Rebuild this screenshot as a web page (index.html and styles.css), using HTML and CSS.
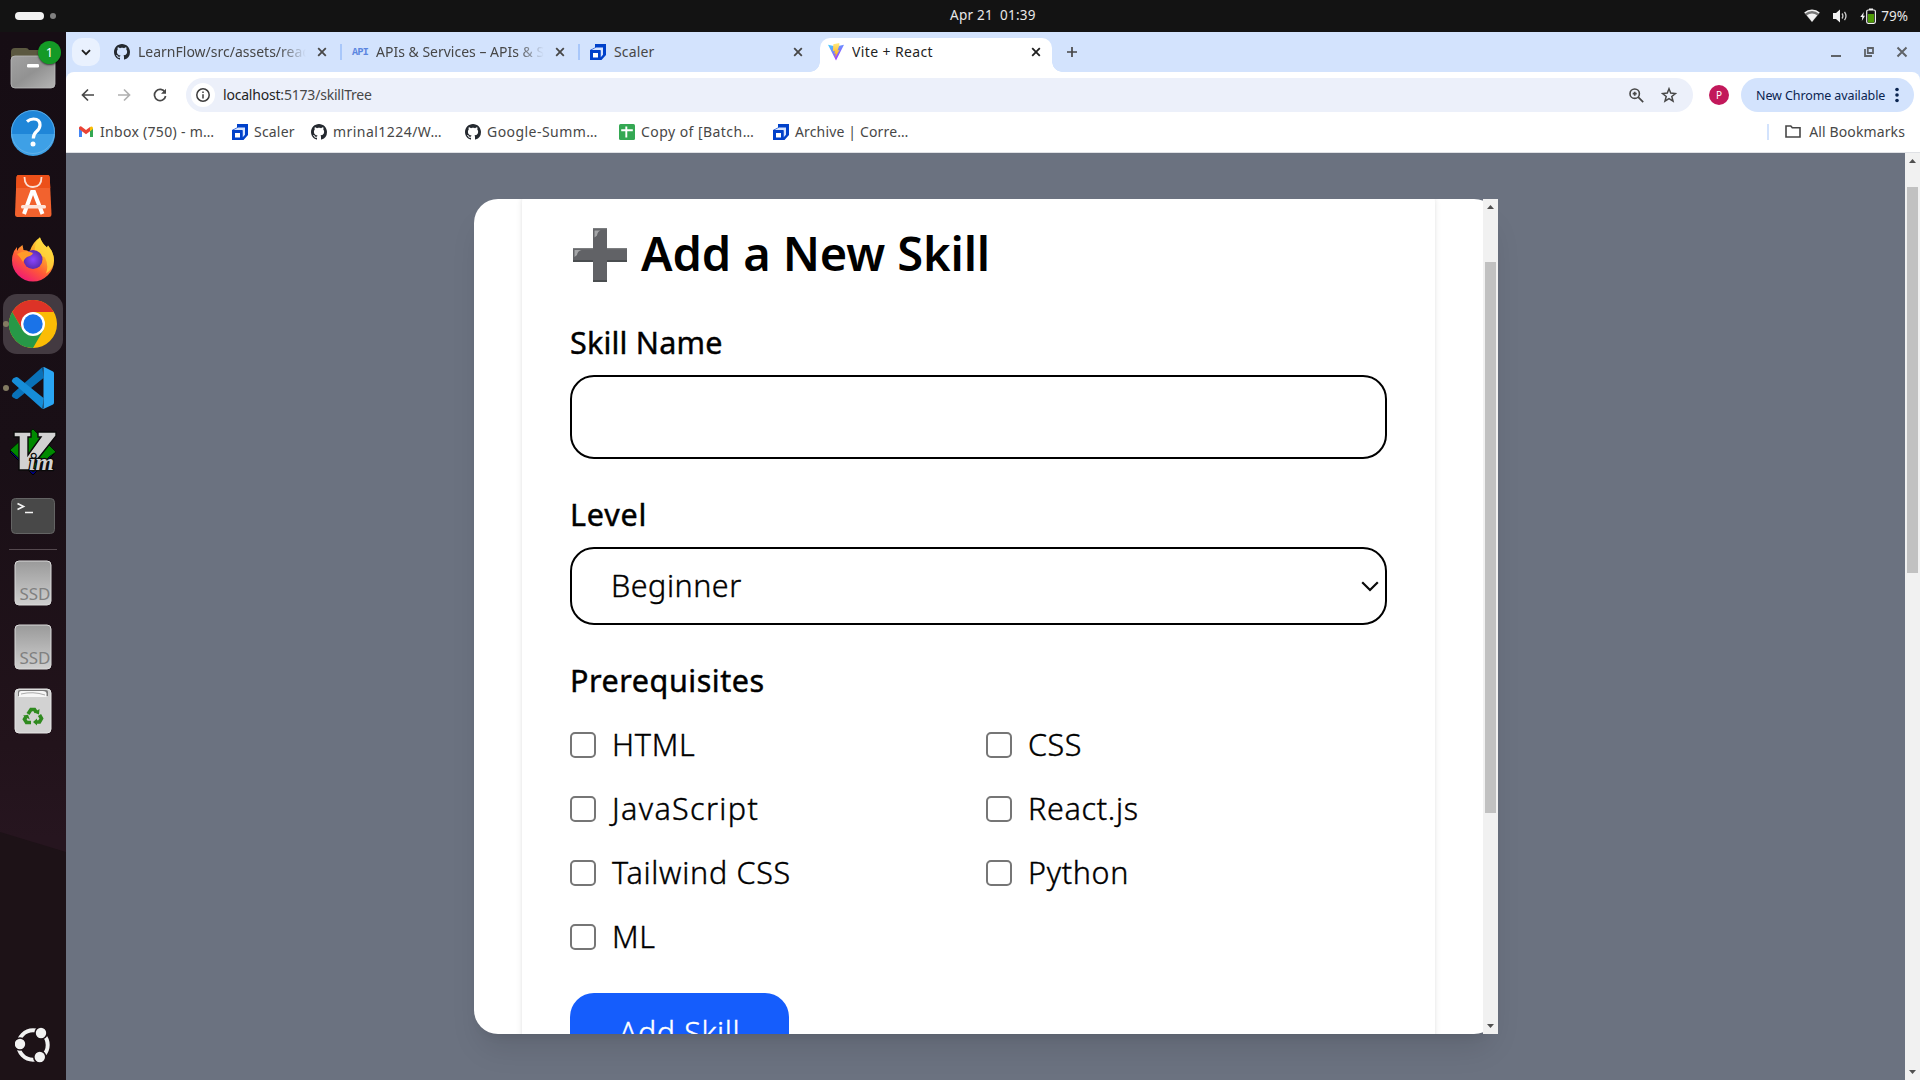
FILE: index.html
```html
<!DOCTYPE html>
<html lang="en">
<head>
<meta charset="utf-8">
<title>Vite + React</title>
<link rel="stylesheet" href="styles.css">
</head>
<body>
<svg class="defs" aria-hidden="true">
  <symbol id="github" viewBox="0 0 16 16"><path fill="#24292f" d="M8 0C3.580 0 0 3.580 0 8c0 3.540 2.290 6.530 5.470 7.590.4.070.55-.17.55-.38 0-.19-.01-.82-.01-1.490-2.010.37-2.530-.49-2.690-.94-.09-.23-.48-.94-.82-1.130-.28-.15-.68-.52-.01-.53.63-.01 1.080.58 1.230.82.72 1.210 1.870.87 2.330.66.07-.52.28-.87.51-1.070-1.780-.2-3.640-.89-3.640-3.950 0-.87.31-1.590.82-2.150-.08-.2-.36-1.020.08-2.120 0 0 .67-.21 2.200.82.64-.18 1.320-.27 2-.27s1.360.09 2 .27c1.530-1.040 2.200-.82 2.200-.82.44 1.100.16 1.920.08 2.120.51.56.82 1.270.82 2.150 0 3.070-1.870 3.750-3.650 3.950.29.25.54.73.54 1.480 0 1.070-.01 1.930-.01 2.200 0 .21.15.46.55.38A8.010 8.010 0 0 0 16 8c0-4.420-3.580-8-8-8z"/></symbol>
  <symbol id="scaler" viewBox="0 0 16 16"><path fill="#0041ca" d="M5 0H16V11L11.500 16H0V6L5 3.500z"/><path fill="#d5e3ff" d="M1.500 6 6 3.600H13V10.800L10.500 13.500V6z"/><path fill="#0041ca" d="M0 6.500h10.500V16H0z"/><path fill="#fff" d="M3 9h5v4.500H3z"/></symbol>
  <symbol id="close" viewBox="0 0 10 10"><path d="M1.200 1.200 8.800 8.800M8.800 1.200 1.200 8.800" stroke="currentColor" stroke-width="1.800" fill="none"/></symbol>
  <linearGradient id="gSsd" x2="0" y2="1"><stop offset="0" stop-color="#9a9a9a"/><stop offset="1" stop-color="#cfcfcf"/></linearGradient>
</svg>

<header class="topbar">
  <div class="workspaces"><i class="ws-on"></i><i class="ws-off"></i></div>
  <div class="clock">Apr 21&ensp;01:39</div>
  <div class="tray">
    <svg width="16" height="14" viewBox="0 0 16 14"><path d="M.5 4.200A11 11 0 0 1 15.500 4.200L8 13.200z" fill="#777"/><path d="M.7 4A11 11 0 0 1 15.300 4" fill="none" stroke="#f2f2f2" stroke-width="1.500"/><path d="M2.800 6.300a8 8 0 0 1 10.400 0L8 12.700z" fill="#f2f2f2"/></svg>
    <svg width="16" height="14" viewBox="0 0 16 14"><path d="M1 4h3l4-3.500v13L4 10H1z" fill="#f2f2f2"/><path d="M10 4.500q1.800 2.500 0 5M12.500 2.800q3 4.200 0 8.400" fill="none" stroke="#ccc" stroke-width="1.300"/></svg>
    <div class="battery">
      <svg width="16" height="16" viewBox="0 0 16 16"><path d="M3.800 4 .3 9h2L1.800 13 5 7.800H3.200z" fill="#f2f2f2"/><rect x="6.700" y="2" width="8.700" height="13.300" rx="1.500" fill="none" stroke="#f2f2f2" stroke-width="1.200"/><path d="M9 .5h4V2H9z" fill="#f2f2f2"/><path d="M8 6h6v8.500H8z" fill="#4e9a06"/></svg>
      <span class="percent">79%</span>
    </div>
  </div>
</header>

<div class="desktop">
  <nav class="dock">
    <svg class="dock-shade" width="66" height="1048" viewBox="0 32 66 1048"><path d="M0 832 66 852V1080H0z" fill="#1d1217"/></svg>
    <div class="app">
      <svg width="48" height="48" viewBox="0 0 48 48"><defs><linearGradient id="gF" x2="1" y2="1"><stop offset="0" stop-color="#a2a2a2"/><stop offset=".5" stop-color="#929292"/><stop offset="1" stop-color="#b5b5b5"/></linearGradient></defs><path d="M2 8q0-4 4-4h11q2 0 3 2h22q3 0 3 4v12H2z" fill="#5b5840"/><rect x="2" y="12" width="44" height="32" rx="4" fill="url(#gF)" stroke="#bcbcbc" stroke-width=".8"/><rect x="18" y="20" width="12" height="3.500" rx="1.200" fill="#fff"/></svg>
      <span class="badge">1</span>
    </div>
    <div class="app"><svg width="48" height="48" viewBox="0 0 48 48"><circle cx="24" cy="24" r="22" fill="#1f86d8"/><path d="M2 26a22 22 0 0 0 44 0z" fill="#3ea0e6"/><circle cx="24" cy="24" r="21.500" fill="none" stroke="#69b5ea" stroke-width=".8"/><path d="M18 13.500q3-2.500 6.500-2.500 6.500 0 6.500 6 0 3.500-3.500 6.500-3.200 2.800-3.200 7" fill="none" stroke="#fff" stroke-width="3.200"/><circle cx="24" cy="36" r="2.500" fill="#fff"/></svg></div>
    <div class="app"><svg width="48" height="48" viewBox="0 0 48 48"><path d="M9.500 3h29q2 0 2.200 2L42.500 42q.1 3-2.500 3H8.500q-2.600 0-2.500-3L7.500 5q.2-2 2-2z" fill="#f2622e"/><path d="M9.500 3h29q2 0 2.200 2l.6 11H7L7.500 5q.2-2 2-2z" fill="#ec5019"/><path d="M15.500 5q0 10 8.500 10t8.500-10" fill="none" stroke="#fbe0d4" stroke-width="1.800"/><path d="M15 42 23 20h2l8.500 22" fill="none" stroke="#fff" stroke-width="4"/><rect x="12" y="33" width="25" height="3.600" rx="1.500" fill="#fde4da"/></svg></div>
    <div class="app"><svg width="48" height="48" viewBox="0 0 48 48"><defs><linearGradient id="gFx" x1=".9" x2=".25" y2="1"><stop offset="0" stop-color="#fff44f"/><stop offset=".35" stop-color="#ffae2b"/><stop offset=".65" stop-color="#ff5a36"/><stop offset="1" stop-color="#f0147a"/></linearGradient><radialGradient id="gFp"><stop offset="0" stop-color="#8a46ff"/><stop offset="1" stop-color="#5b2bb0"/></radialGradient></defs><path d="M31 1.500q2 6 7 10l1-2q6 7 6 15a21 21 0 0 1-42 0Q3 16 8 11v4q2-4 5.500-6l1 5q4 0 6 2 3-10 10.500-14.500z" fill="url(#gFx)"/><path d="M31 1.500q2 6 7 10l1-2q6 7 6 15-1 9-8 13 3-8-1-16-6-3-10-6-1-8 5-14.500z" fill="#ffdb3d" opacity=".75"/><circle cx="24" cy="23.500" r="9.500" fill="url(#gFp)"/><path d="M8 18q8-5 16-1-1 3-6 4 -3 2-4 5-3-5-6-8z" fill="#ff9a2a"/></svg></div>
    <div class="app active"><i class="run-dot"></i><svg width="48" height="48" viewBox="0 0 48 48"><circle cx="24" cy="24" r="24" fill="#fbbc05"/><path d="M24 12H44.800A24 24 0 0 0 3.200 12L13.600 30z" fill="#dd3327"/><path d="M13.600 30 3.200 12A24 24 0 0 0 24 48L34.400 30z" fill="#279847"/><circle cx="24" cy="24" r="12" fill="#fff"/><circle cx="24" cy="24" r="9.700" fill="#1a73e8"/></svg></div>
    <div class="app"><i class="run-dot"></i><svg width="48" height="48" viewBox="0 0 48 48"><path d="M4 33.500q-2-2-.3-4L33.500 3l1 11L9 34.500q-1.500 1.200-3 0z" fill="#0971b8"/><path d="M4 14.500q-2 2-.3 4L33.500 45l1-11L9 13.500q-1.500-1.200-3 0z" fill="#168dd8"/><path d="M34 3.300q.7-.5 1.600 0L44 7.500q1 .6 1 2v29q0 1.400-1 2l-8.500 4q-1 .5-2 0l1-.5V3.500z" fill="#2aa5f3"/></svg></div>
    <div class="app"><svg width="48" height="48" viewBox="0 0 48 48"><path d="M24 1 47 24 24 47 1 24z" fill="#00007f" stroke="#000"/><path d="M24 1 47 24 40 29 24 44 1 22z" fill="#008a00" stroke="#001c00"/><path d="M5 4H22V9H19V27L32 9H29V4H47V8L20 42H10V9H5z" fill="#d2d2d2" stroke="#0a0a0a" stroke-width="1.400"/><text x="20" y="42" textLength="25" lengthAdjust="spacingAndGlyphs" class="vim-im">im</text></svg></div>
    <div class="app"><svg width="48" height="48" viewBox="0 0 48 48"><rect x="2.500" y="6.500" width="43" height="35" rx="4" fill="#484848" stroke="#646464"/><path d="m8.500 11.500 6 3-6 3M16 20.500h8" fill="none" stroke="#f4f4f4" stroke-width="1.700"/></svg></div>
    <hr class="dock-sep">
    <div class="app"><svg width="48" height="48" viewBox="0 0 48 48"><rect x="6" y="2" width="36" height="44" rx="4" fill="url(#gSsd)" stroke="#dadada"/><text x="10.500" y="40.500" textLength="31" lengthAdjust="spacingAndGlyphs" class="drive">SSD</text></svg></div>
    <div class="app"><svg width="48" height="48" viewBox="0 0 48 48"><rect x="6" y="2" width="36" height="44" rx="4" fill="url(#gSsd)" stroke="#dadada"/><text x="10.500" y="40.500" textLength="31" lengthAdjust="spacingAndGlyphs" class="drive">SSD</text></svg></div>
    <div class="app"><svg width="48" height="48" viewBox="0 0 48 48"><rect x="6" y="2" width="36" height="44" rx="4" fill="#d2d2d2" stroke="#e6e6e6"/><path d="M9 4.500q0-1.500 2-1.500h26q2 0 2 1.500V9H9z" fill="#7b7b7b"/><path d="M10 10V6q0-2 2-2h22q3 0 3.500 2v4z" fill="#f6f6f6"/><path d="M12 7q12-3 24 1" stroke="#aaa" fill="none"/><g fill="none" stroke="#2f8a1f" stroke-width="3.600"><path d="m19 27 3-4.500h3.500l1.800 2.800"/><path d="m30.500 28 2 3.500-2 3.500h-3"/><path d="M22 35.500h-4.500l-2-3.200 1.500-2.500"/></g><path d="m30.500 22-.5 5.500-5-2zM28 31.500v7l-4-3.500zM14 28.500l5-.8 1.800 4.800z" fill="#2f8a1f"/></svg></div>
    <div class="app launcher"><svg width="36" height="36" viewBox="0 0 36 36"><circle cx="18" cy="18" r="14.700" fill="none" stroke="#f2f2f2" stroke-width="4"/><g fill="#f2f2f2" stroke="#1d1217" stroke-width="1.600"><circle cx="5" cy="17" r="6"/><circle cx="26" cy="6" r="6"/><circle cx="24.800" cy="30" r="6"/></g></svg></div>
  </nav>

  <main class="browser">
    <div class="tabstrip">
      <button class="tab-search"><svg width="10" height="7" viewBox="0 0 10 7"><path d="m1 1.200 4 4 4-4" fill="none" stroke="#1f1f1f" stroke-width="1.900"/></svg></button>
      <div class="tab t1"><svg width="16" height="16"><use href="#github"/></svg><span class="title fade">LearnFlow/src/assets/react.svg</span><svg class="x" width="10" height="10"><use href="#close"/></svg></div>
      <i class="tab-sep"></i>
      <div class="tab t2"><span class="api">API</span><span class="title fade">APIs &amp; Services – APIs &amp; Services</span><svg class="x" width="10" height="10"><use href="#close"/></svg></div>
      <i class="tab-sep"></i>
      <div class="tab t3"><svg width="16" height="16"><use href="#scaler"/></svg><span class="title">Scaler</span><svg class="x" width="10" height="10"><use href="#close"/></svg></div>
      <div class="tab current"><svg width="16" height="18" viewBox="0 0 16 18"><defs><linearGradient id="gV" x2=".6" y2="1"><stop offset="0" stop-color="#41d1ff"/><stop offset="1" stop-color="#a832fe"/></linearGradient><linearGradient id="gB" x2="0" y2="1"><stop offset="0" stop-color="#ffea83"/><stop offset="1" stop-color="#ffa800"/></linearGradient></defs><path d="M0 1.800 8 17.500 16 1.800 8 3.500z" fill="url(#gV)"/><path d="m11.300 0-6 1.200-.4 7 2-.4-.6 3 1.500-.4-.7 4.300L11.500 7l-2 .4 1.800-5z" fill="url(#gB)"/></svg><span class="title">Vite + React</span><svg class="x" width="10" height="10"><use href="#close"/></svg></div>
      <svg class="new-tab" width="12" height="12" viewBox="0 0 12 12"><path d="M6 1v10M1 6h10" stroke="#474747" stroke-width="1.700"/></svg>
      <div class="win-buttons">
        <svg width="12" height="12" viewBox="0 0 12 12"><path d="M1 10h10" stroke="#5f6368" stroke-width="2"/></svg>
        <svg width="12" height="12" viewBox="0 0 12 12"><path d="M4.800 2h5.200v5H4.800zM2 3v7h7" fill="none" stroke="#5f6368" stroke-width="1.800"/></svg>
        <svg width="12" height="12" viewBox="0 0 12 12"><path d="m1.500 1.500 9 9m0-9-9 9" stroke="#5f6368" stroke-width="2"/></svg>
      </div>
    </div>

    <div class="toolbar">
      <svg class="nav" width="14" height="14" viewBox="0 0 14 14"><path d="M13 7H2M7 1.500 1.500 7 7 12.500" fill="none" stroke="#474747" stroke-width="1.700"/></svg>
      <svg class="nav" width="14" height="14" viewBox="0 0 14 14"><path d="M1 7h11M7 1.500 12.500 7 7 12.500" fill="none" stroke="#b0b0b0" stroke-width="1.700"/></svg>
      <svg class="nav" width="14" height="14" viewBox="0 0 14 14"><path d="M12 4.300A5.600 5.600 0 1 0 12.600 8" fill="none" stroke="#474747" stroke-width="1.700"/><path d="M13 .8v5H8z" fill="#474747"/></svg>
      <div class="omnibox">
        <span class="site-info"><svg width="14" height="14" viewBox="0 0 14 14"><circle cx="7" cy="7" r="6.200" fill="none" stroke="#3c3c3c" stroke-width="1.500"/><path d="M7 6.200V10.500M7 3.500V5" stroke="#3c3c3c" stroke-width="1.500"/></svg></span>
        <span class="url"><b>localhost</b>:5173/skillTree</span>
        <svg width="15" height="15" viewBox="0 0 15 15"><circle cx="5.700" cy="5.700" r="4.700" fill="none" stroke="#474747" stroke-width="1.600"/><path d="m9.200 9.200 5 5M3.700 5.700h4M5.700 3.700v4" stroke="#474747" stroke-width="1.700"/></svg>
        <svg width="16" height="16" viewBox="0 0 16 16"><path d="m8 1.800 1.700 4.300 4.700.4-3.600 3 1.200 4.600L8 11.600 4 14.100l1.200-4.600-3.600-3 4.700-.4z" fill="none" stroke="#474747" stroke-width="1.500"/></svg>
      </div>
      <span class="avatar">P</span>
      <div class="update">New Chrome available<svg width="4" height="16" viewBox="0 0 4 16"><g fill="#0a2450"><circle cx="2" cy="2.500" r="1.800"/><circle cx="2" cy="8" r="1.800"/><circle cx="2" cy="13.500" r="1.800"/></g></svg></div>
    </div>

    <div class="bookmarks">
      <span class="bm b1"><svg width="16" height="16" viewBox="0 0 16 16"><path d="M1 4v9h3V7z" fill="#4285f4"/><path d="M15 4v9h-3V7z" fill="#34a853"/><path d="M1 3.500q1.500-2 3-.5L8 6l4-3v4.200L8 10.300 1 5z" fill="#ea4335"/><path d="M12 3q2-1.500 3 .8V5l-3 2.300z" fill="#fbbc04"/></svg>Inbox (750) - m…</span>
      <span class="bm b2"><svg width="16" height="16"><use href="#scaler"/></svg>Scaler</span>
      <span class="bm b3"><svg width="16" height="16"><use href="#github"/></svg>mrinal1224/W…</span>
      <span class="bm b4"><svg width="16" height="16"><use href="#github"/></svg>Google-Summ…</span>
      <span class="bm b5"><svg width="16" height="16" viewBox="0 0 16 16"><rect width="16" height="16" rx="1.500" fill="#34a853"/><path d="M2.200 6.200h11.600M7.300 2.500v11" stroke="#fff" stroke-width="1.900"/></svg>Copy of [Batch…</span>
      <span class="bm b6"><svg width="16" height="16"><use href="#scaler"/></svg>Archive | Corre…</span>
      <i class="bm-sep"></i>
      <span class="bm all"><svg width="16" height="13" viewBox="0 0 16 13"><path d="M1 1h4.800l1.500 1.800H15V12H1z" fill="none" stroke="#474747" stroke-width="1.600"/></svg>All Bookmarks</span>
    </div>

    <div class="viewport">
      <div class="backdrop">
        <section class="modal">
          <div class="scroll-area">
            <form class="card">
              <h2><svg width="54" height="54" viewBox="0 0 54 54"><path d="M20 1q0-1 1-1h12q1 0 1 1v19h19q1 0 1 1v12q0 1-1 1H34v19q0 1-1 1H21q-1 0-1-1V34H1q-1 0-1-1V21q0-1 1-1h19z" fill="#616266"/><path d="M20 52h14v2H20zM0 32h20v2H0zM34 32h20v2H34z" fill="#4a4d50"/><path d="M20 0h14v1.200H20zM0 20h20v1.200H0zM34 20h20v1.200H34z" fill="#7c7e80"/><path d="M21.500 2.500h6q-3 1-3.500 5l-2.500 2zM1.500 22h7q-4 1-4.500 5L1.500 29z" fill="#a5a6a8"/></svg><span>Add a New Skill</span></h2>
              <label class="l-name">Skill Name</label>
              <div class="field"></div>
              <label class="l-level">Level</label>
              <div class="field select"><span>Beginner</span><svg width="18" height="11" viewBox="0 0 18 11"><path d="m1.200 1.200 7.800 7.800 7.800-7.800" fill="none" stroke="#0a0a0a" stroke-width="2.200"/></svg></div>
              <label class="l-pre">Prerequisites</label>
              <div class="checks">
                <span class="check"><i></i>HTML</span>
                <span class="check css"><i></i>CSS</span>
                <span class="check js"><i></i>JavaScript</span>
                <span class="check"><i></i>React.js</span>
                <span class="check"><i></i>Tailwind CSS</span>
                <span class="check"><i></i>Python</span>
                <span class="check"><i></i>ML</span>
              </div>
              <div class="submit">Add Skill</div>
            </form>
          </div>
          <div class="scrollbar inner"><i class="up"></i><i class="thumb"></i><i class="down"></i></div>
        </section>
      </div>
      <div class="scrollbar outer"><i class="up"></i><i class="thumb"></i><i class="down"></i></div>
    </div>
  </main>
</div>
</body>
</html>
```
FILE: styles.css
```css
* { box-sizing: border-box; }
body {
  margin: 0;
  width: 1920px;
  height: 1080px;
  overflow: hidden;
  font-family: "Noto Sans", "Open Sans", sans-serif;
  font-size: 14px;
  color: #000;
  white-space: nowrap;
}
svg { display: block; flex: none; }
i { display: block; flex: none; }
.defs { position: absolute; width: 0; height: 0; }

/* system bar */
.topbar {
  display: grid;
  grid-template-columns: 950px 1fr auto;
  align-items: center;
  height: 32px;
  padding-right: 12px;
  background: #131313;
  color: #e8e8e8;
  font-size: 13.5px;
  line-height: 28px;
}
.workspaces { display: flex; align-items: center; gap: 6px; padding-left: 15px; }
.ws-on { width: 29px; height: 8px; border-radius: 4px; background: #f2f2f2; }
.ws-off { width: 6px; height: 6px; border-radius: 50%; background: #808080; }
.clock { padding-bottom: 2px; letter-spacing: .26px; }
.tray { display: flex; align-items: center; gap: 12px; }
.battery { display: flex; align-items: center; gap: 5px; }

.desktop { display: flex; height: 1048px; }

/* dock */
.dock {
  position: relative;
  display: flex;
  flex-direction: column;
  width: 66px;
  padding-top: 4px;
  background: linear-gradient(#160d14, #190f16 40%, #22131b 68%, #26151f 77%);
}
.dock-shade { position: absolute; left: 0; top: 0; }
.app {
  position: relative;
  display: flex;
  align-items: center;
  justify-content: center;
  width: 60px;
  height: 60px;
  margin: 2px 3px;
  border-radius: 14px;
}
.app.active { background: #433a41; }
.badge {
  position: absolute;
  left: 35px;
  top: 3px;
  width: 23px;
  height: 23px;
  border-radius: 50%;
  background: #149a26;
  box-shadow: 0 1px 2px rgba(0, 0, 0, .6);
  color: #fff;
  font-size: 13px;
  line-height: 23px;
  text-align: center;
}
.run-dot {
  position: absolute;
  left: 0;
  top: 27px;
  width: 6px;
  height: 6px;
  border-radius: 50%;
  background: #837b62;
}
.vim-im {
  font: italic bold 23px "Liberation Serif", serif;
  fill: #d2d2d2;
  stroke: #0a0a0a;
  stroke-width: 2.5px;
  paint-order: stroke;
}
.drive { font-size: 16px; fill: #808080; }
.dock-sep { width: 48px; height: 1px; margin: 1px 9px; border: 0; background: #55494f; }
.launcher { margin-top: auto; margin-bottom: 5px; }

/* browser chrome */
.browser { display: flex; flex-direction: column; flex: 1; background: #d3e3fd; }
.tabstrip { display: flex; align-items: center; height: 40px; padding-left: 6px; color: #474747; font-size: 14px; }
.tab-search {
  display: flex;
  align-items: center;
  justify-content: center;
  width: 28px;
  height: 28px;
  padding: 0;
  border: 0;
  border-radius: 10px;
  background: #e9f1fe;
}
.tab { display: flex; align-items: center; height: 40px; }
.tab .title { flex: 1; min-width: 0; margin-left: 8px; padding-bottom: 2px; overflow: hidden; }
.tab .title.fade { -webkit-mask-image: linear-gradient(90deg, #000 84%, transparent); mask-image: linear-gradient(90deg, #000 84%, transparent); }
.x { margin-left: 11px; }
.t1 { width: 213px; margin-left: 14px; }
.t2 { width: 213px; margin-left: 10px; }
.t3 { width: 213px; margin-left: 10px; }
.t3 .title { letter-spacing: .15px; }
.tab-sep { width: 2px; height: 16px; margin-left: 13px; background: #a8c7fa; }
.api { width: 16px; font: bold 10px "Liberation Mono", monospace; color: #5b86e0; letter-spacing: -.6px; }
.tab.current {
  position: relative;
  align-self: flex-end;
  width: 232px;
  height: 34px;
  margin-left: 17px;
  padding: 0 11px 6px 8px;
  border-radius: 10px 10px 0 0;
  background: #fff;
  color: #1f1f1f;
  letter-spacing: .38px;
}
.tab.current::before,
.tab.current::after {
  content: "";
  position: absolute;
  bottom: 0;
  width: 10px;
  height: 10px;
}
.tab.current::before { left: -10px; background: radial-gradient(circle at 0 0, transparent 9.5px, #fff 10px); }
.tab.current::after { right: -10px; background: radial-gradient(circle at 100% 0, transparent 9.5px, #fff 10px); }
.new-tab { margin-left: 14px; }
.win-buttons { display: flex; gap: 21px; margin-left: auto; padding-right: 12px; }

.toolbar {
  display: flex;
  align-items: center;
  height: 46px;
  padding-left: 15px;
  padding-right: 6px;
  border-radius: 8px 8px 0 0;
  background: #fff;
}
.nav { margin-right: 22px; }
.omnibox {
  display: flex;
  align-items: center;
  width: 1507px;
  height: 34px;
  margin-left: -3px;
  padding: 0 16px 0 5px;
  border-radius: 17px;
  background: #ecf0fa;
}
.site-info {
  display: flex;
  align-items: center;
  justify-content: center;
  width: 24px;
  height: 24px;
  border-radius: 50%;
  background: #fff;
}
.url { flex: 1; margin-left: 8px; padding-bottom: 2px; color: #474747; letter-spacing: -.2px; }
.url b { font-weight: 400; color: #1f1f1f; }
.omnibox svg + svg { margin-left: 17px; }
.avatar {
  width: 20px;
  height: 20px;
  margin-left: 16px;
  border-radius: 50%;
  background: #c2185b;
  color: #fff;
  font-size: 10px;
  line-height: 20px;
  text-align: center;
}
.update {
  display: flex;
  align-items: center;
  justify-content: space-between;
  width: 173px;
  height: 34px;
  margin-left: 12px;
  padding: 0 15px;
  border-radius: 17px;
  background: #d3e3fd;
  color: #0a2450;
  font-size: 12.5px;
  letter-spacing: -.1px;
}
.bookmarks {
  display: flex;
  align-items: center;
  height: 35px;
  padding: 0 15px 7px 12px;
  border-bottom: 1px solid #dfe1e5;
  background: #fff;
  color: #474747;
}
.bm { display: flex; align-items: center; gap: 6px; letter-spacing: .45px; }
.b1 { width: 154px; letter-spacing: .3px; }
.b2 { width: 79px; letter-spacing: .2px; }
.b3 { width: 154px; }
.b4 { width: 154px; }
.b5 { width: 154px; }
.b6 { letter-spacing: .15px; }
.bm.all { gap: 8px; letter-spacing: .12px; }
.bm-sep { width: 2px; height: 16px; margin-left: auto; margin-right: 16px; background: #d3e3fd; }

/* page */
.viewport { display: flex; flex: 1; min-height: 0; }
.backdrop { flex: 1; padding: 46px 0 0 408px; background: #6b7280; overflow: hidden; }
.modal {
  display: flex;
  width: 1024px;
  height: 835px;
  border-radius: 24px;
  background: #fff;
  box-shadow: 0 20px 30px -6px rgba(0, 0, 0, .1), 0 8px 12px -8px rgba(0, 0, 0, .1);
}
.scroll-area { width: 1009px; height: 835px; padding: 0 48px; border-radius: 24px 0 0 24px; overflow: hidden; }
.card {
  width: 913px;
  height: 960px;
  margin-top: -20px;
  padding: 42px 48px 0;
  border-radius: 24px;
  background: #fff;
  box-shadow: 0 2px 6px rgba(0, 0, 0, .1), 0 2px 4px -2px rgba(0, 0, 0, .1);
}
h2 {
  display: flex;
  align-items: center;
  gap: 14px;
  height: 66px;
  margin: 0;
  padding-left: 3px;
  font-size: 47px;
  font-weight: 600;
  letter-spacing: -.12px;
  line-height: 64px;
}
h2 svg { margin-top: 1px; }
h2 span { padding-bottom: 2px; }
label {
  display: block;
  height: 48px;
  margin-top: 31px;
  font-size: 30.5px;
  line-height: 48px;
  -webkit-text-stroke: .45px #000;
}
.l-name { letter-spacing: .2px; }
.l-level { letter-spacing: .8px; }
.l-pre { letter-spacing: .55px; }
.field { height: 84px; margin-top: 9px; border: 2px solid #000; border-radius: 24px; }
.field.select {
  display: flex;
  align-items: center;
  justify-content: space-between;
  height: 78px;
  padding: 0 6px 0 39px;
  font-size: 30.5px;
  font-weight: 300;
  letter-spacing: .5px;
  -webkit-text-stroke: .4px #000;
}
.field.select span { padding-bottom: 2px; }
.checks {
  display: grid;
  grid-template-columns: 1fr 1fr;
  column-gap: 15px;
  row-gap: 24px;
  margin-top: 21px;
  font-size: 30.5px;
  font-weight: 300;
  letter-spacing: .7px;
  line-height: 38px;
  -webkit-text-stroke: .4px #000;
}
.check { display: flex; align-items: center; gap: 16px; height: 40px; padding-bottom: 2px; }
.check.js { letter-spacing: 1.35px; }
.check.css { letter-spacing: .5px; }
.check i { width: 26px; height: 26px; margin-top: 2px; border: 2px solid #767676; border-radius: 5px; }
.submit {
  width: 219px;
  height: 78px;
  margin-top: 36px;
  border-radius: 24px;
  background: #155dfc;
  color: #fff;
  font-size: 30.5px;
  font-weight: 300;
  letter-spacing: .6px;
  line-height: 78px;
  text-align: center;
  -webkit-text-stroke: .4px #fff;
}

/* scrollbars */
.scrollbar { display: flex; flex-direction: column; align-items: center; width: 15px; background: #f1f1f1; }
.scrollbar .thumb { width: 11px; background: #c1c1c1; }
.up, .down { width: 7px; height: 4px; background: #505050; }
.up { clip-path: polygon(50% 0, 100% 100%, 0 100%); }
.down { margin-top: auto; clip-path: polygon(0 0, 100% 0, 50% 100%); }
.inner { padding: 6px 0; }
.inner .thumb { height: 551px; margin-top: 53px; }
.outer { padding: 6px 0; }
.outer .thumb { height: 386px; margin-top: 24px; }
```
